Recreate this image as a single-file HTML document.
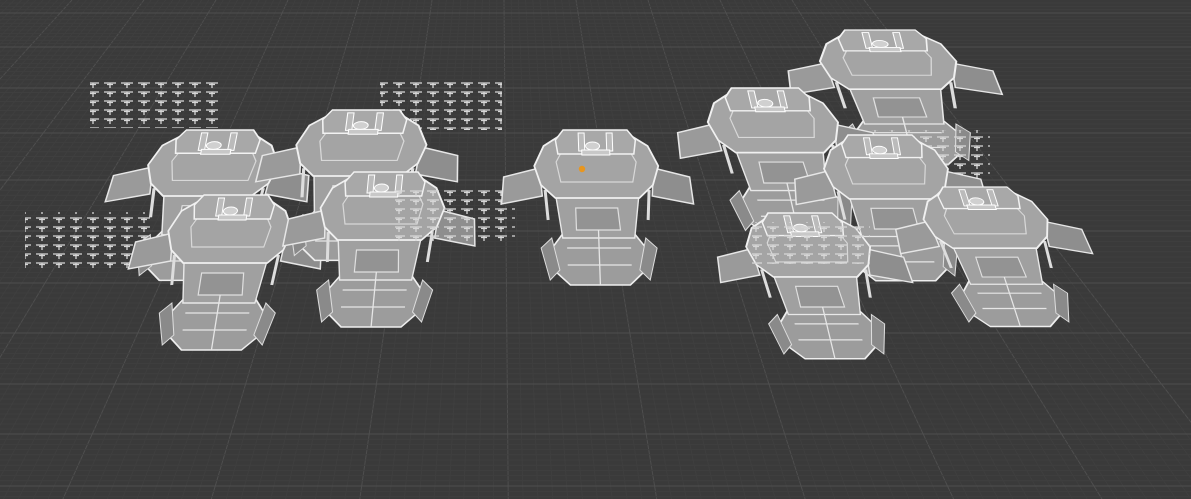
<!DOCTYPE html>
<html><head><meta charset="utf-8"><style>
html,body{margin:0;padding:0;background:#3a3a3a;overflow:hidden}
svg{display:block}
</style></head><body>
<svg id="s" width="1191" height="499" viewBox="0 0 1191 499" xmlns="http://www.w3.org/2000/svg">
<defs>
<pattern id="sw" width="17" height="9" patternUnits="userSpaceOnUse">
<path d="M2 2h12M8 2v5M5 3.5h6" stroke="#d6d6d6" stroke-width="1.3" fill="none"/>
</pattern>
<g id="ship">
<polygon points="-57,38 -93,47 -96,74 -55,66" fill="#9a9a9a" stroke="#e6e6e6" stroke-width="1.5"/>
<polygon points="57,38 93,47 96,74 55,66" fill="#8e8e8e" stroke="#e6e6e6" stroke-width="1.5"/>
<path d="M-52 60L-50 90M52 60L50 90" stroke="#ddd" stroke-width="3"/>
<polygon points="-33,100 33,100 47,118 46,140 30,155 -30,155 -46,140 -47,118" fill="#9c9c9c" stroke="#eeeeee" stroke-width="1.6"/>
<polygon points="-47,108 -58,118 -50,150 -40,140" fill="#8a8a8a" stroke="#ddd" stroke-width="1"/>
<polygon points="47,108 58,118 50,150 40,140" fill="#8a8a8a" stroke="#ddd" stroke-width="1"/>
<polygon points="-42,62 42,62 36,108 -36,108" fill="#a0a0a0" stroke="#e8e8e8" stroke-width="1.4"/>
<polygon points="-22,78 20,78 22,100 -22,100" fill="#939393" stroke="#e0e0e0" stroke-width="1.2"/>
<polygon points="-36,6 36,6 52,16 62,36 56,55 42,68 -42,68 -56,55 -62,36 -52,16" fill="#a4a4a4" stroke="#f0f0f0" stroke-width="1.8"/>
<polygon points="-32,18 32,18 40,32 36,52 -36,52 -40,32" fill="none" stroke="#d8d8d8" stroke-width="1.2"/>
<polygon points="-32,0 32,0 40,10 38,24 -38,24 -40,10" fill="#a8a8a8" stroke="#f2f2f2" stroke-width="1.5"/>
<rect x="-17" y="3" width="6" height="18" fill="#bbb" stroke="#fff"/>
<rect x="11" y="3" width="6" height="18" fill="#bbb" stroke="#fff"/>
<rect x="-14" y="20" width="28" height="5" fill="#c8c8c8" stroke="#fff"/>
<ellipse cx="-3" cy="16" rx="7" ry="4" fill="#d0d0d0" stroke="#fff"/>
<path d="M-32 118H32M-32 135H32M0 100V155" stroke="#e6e6e6" stroke-width="1.3"/>
</g>
</defs>
<rect width="1191" height="499" fill="#3a3a3a"/>
<g id="grid"></g>
<rect x="90" y="82" width="130" height="46" fill="url(#sw)"/>
<rect x="380" y="82" width="122" height="48" fill="url(#sw)"/>
<rect x="25" y="212" width="130" height="58" fill="url(#sw)"/>
<use href="#ship" transform="translate(220,130) skewX(-11) scale(1.05,0.97)"/>
<use href="#ship" transform="translate(236,195) skewX(-9) scale(1.0,1.0)"/>
<use href="#ship" transform="translate(366,110) skewX(-7.5) scale(1.05,0.97)"/>
<use href="#ship" transform="translate(386,172) skewX(-5.5) scale(1.0,1.0)"/>
<rect x="395" y="188" width="120" height="54" fill="url(#sw)"/>
<use href="#ship" transform="translate(595,130) skewX(2) scale(1.0,1.0)"/>
<circle cx="582" cy="169" r="3.2" fill="#e8961f"/>
<use href="#ship" transform="translate(880,30) skewX(14.5) scale(1.1,0.87)"/>
<use href="#ship" transform="translate(765,88) skewX(13) scale(1.05,0.95)"/>
<rect x="860" y="130" width="130" height="50" fill="url(#sw)"/>
<use href="#ship" transform="translate(880,135) skewX(10) scale(1.0,0.94)"/>
<use href="#ship" transform="translate(975,187) skewX(18) scale(1.0,0.9)"/>
<use href="#ship" transform="translate(800,213) skewX(13.5) scale(1.0,0.94)"/>
<rect x="752" y="222" width="118" height="42" fill="url(#sw)"/>
</svg>
<script>
(function(){
var g=document.getElementById('grid'),h='';
var vx=500,vy=-470;
for(var i=-80;i<=120;i++){
 var xa=i*7.2;
 var xb=vx+(xa-vx)*((499-vy)/(-vy));
 var maj=(i%10===0);
 h+='<line x1="'+xa+'" y1="0" x2="'+xb+'" y2="499" stroke="'+(maj?'#4e4e4e':'#3f3f3f')+'" stroke-width="1"/>';
}
var M=[-20,13,47,88,133,180,231,283,333,384,434,486,540];
for(var k=0;k<M.length-1;k++){
 for(var j=0;j<10;j++){
  var y=M[k]+(M[k+1]-M[k])*j/10;
  if(y<0||y>499)continue;
  h+='<line x1="0" y1="'+y+'" x2="1191" y2="'+y+'" stroke="'+(j===0?'#4e4e4e':'#3f3f3f')+'" stroke-width="1"/>';
 }
}
g.innerHTML=h;
})();
</script>
</body></html>
